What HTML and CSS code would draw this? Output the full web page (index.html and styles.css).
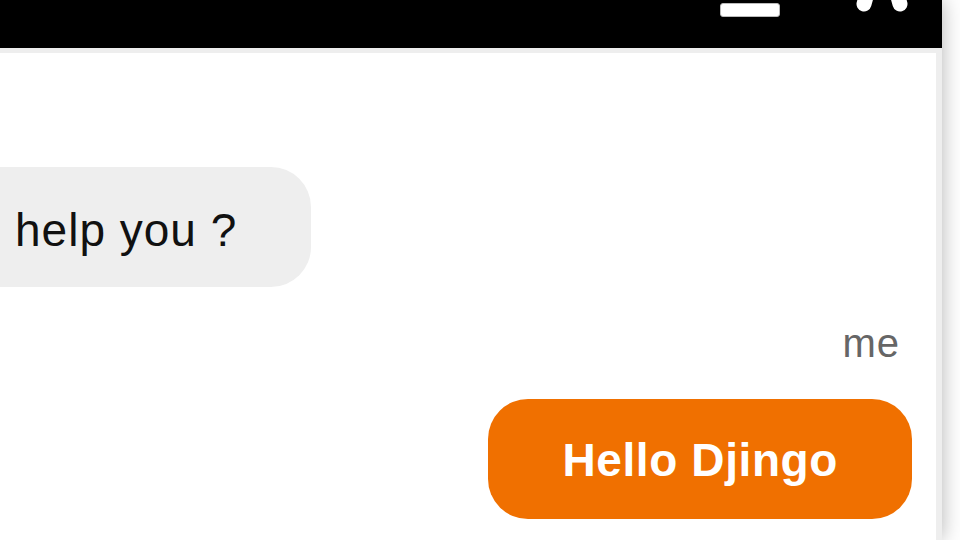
FILE: index.html
```html
<!DOCTYPE html>
<html lang="en">
<head>
<meta charset="utf-8">
<title>Djingo chat</title>
<link rel="stylesheet" href="styles.css">
</head>
<body>
<div class="widget">
  <header class="bar">
    <button class="ico ico-min" aria-label="Minimize">
      <svg width="60" height="20" viewBox="0 0 60 20"><rect x="0.5" y="3.5" width="59" height="13" rx="2.5" fill="#fff" stroke="#bbb" stroke-width="1"/></svg>
    </button>
    <button class="ico ico-close" aria-label="Close">
      <svg width="60" height="20" viewBox="0 0 60 20"><g stroke="#fff" stroke-width="15" stroke-linecap="round"><line x1="30" y1="-60" x2="12" y2="4"/><line x1="30" y1="-60" x2="48" y2="4"/></g></svg>
    </button>
  </header>
  <main class="chat">
    <div class="msg msg-bot">
      <div class="bubble bubble-bot">help you ?</div>
    </div>
    <div class="msg msg-me">
      <div class="author">me</div>
      <div class="bubble bubble-me">Hello Djingo</div>
    </div>
  </main>
</div>
</body>
</html>
```
FILE: styles.css
```css
html, body {
  margin: 0;
  padding: 0;
  height: 100%;
  overflow: hidden;
  background: #fff;
  font-family: "Liberation Sans", Arial, sans-serif;
}

.widget {
  width: 942px;
  height: 100%;
  display: flex;
  flex-direction: column;
  box-shadow: 0 0 20px rgba(0, 0, 0, 0.3);
  background: #fff;
}

.bar {
  height: 48px;
  flex: none;
  background: #000;
  display: flex;
  justify-content: flex-end;
  align-items: flex-start;
  gap: 72px;
  padding-right: 30px;
}

.ico {
  border: 0;
  padding: 0;
  margin: 0;
  background: none;
  display: block;
  line-height: 0;
}

.ico svg {
  display: block;
}

.chat {
  flex: 1;
  border-top: 5px solid #eee;
  border-right: 6px solid #eee;
  padding-top: 114px;
  display: flex;
  flex-direction: column;
}

.msg {
  display: flex;
  flex-direction: column;
}

.msg-bot {
  align-items: flex-start;
}

.msg-me {
  align-items: flex-end;
  padding-right: 24px;
  margin-top: 33px;
}

.bubble {
  font-size: 46px;
  line-height: 54px;
  white-space: nowrap;
}

.bubble-bot {
  background: #eee;
  color: #111;
  padding: 36px 74px 30px 15px;
  border-radius: 0 40px 40px 0;
  letter-spacing: 1px;
}

.author {
  font-size: 40px;
  line-height: 46px;
  color: #666;
  padding-right: 12px;
  letter-spacing: 1px;
}

.bubble-me {
  margin-top: 33px;
  background: #f07000;
  color: #fff;
  font-weight: bold;
  padding: 34px 74px 32px;
  border-radius: 40px;
  letter-spacing: 0.6px;
}
```
